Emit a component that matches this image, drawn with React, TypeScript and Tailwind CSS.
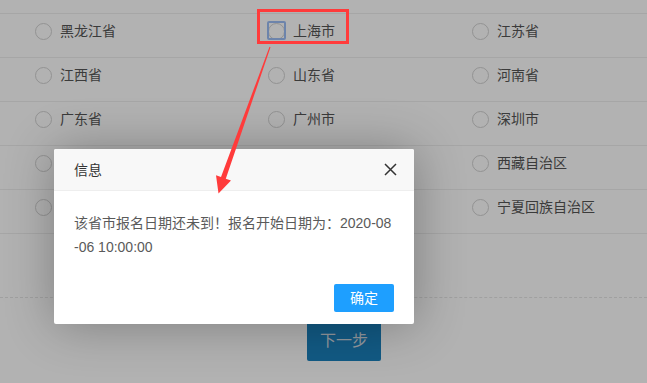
import React from "react";

const rows: (string | null)[][] = [
  ["黑龙江省", "上海市", "江苏省"],
  ["江西省", "山东省", "河南省"],
  ["广东省", "广州市", "深圳市"],
  ["", "", "西藏自治区"],
  ["", "", "宁夏回族自治区"],
];

function Radio({ focused }: { focused?: boolean }) {
  return (
    <span className="relative inline-block w-[17px] h-[17px] shrink-0">
      <span className="block w-[17px] h-[17px] rounded-full border border-[#d2d2d2] bg-white" />
      {focused && (
        <span className="absolute left-[-1px] top-[-2px] w-[19px] h-[19px] border-2 border-[#9dbdf5] rounded-[2px]" />
      )}
    </span>
  );
}

export default function App() {
  const font = { fontFamily: '"Liberation Sans", "Noto Sans CJK SC", sans-serif' };
  return (
    <div className="relative w-[647px] h-[383px] overflow-hidden bg-white" style={font}>
      {/* page */}
      <div className="pt-[13px]">
        <div className="border-t border-[#eeeeee]">
          {rows.map((r, i) => (
            <div key={i} className="h-[44px] border-b border-[#eeeeee] pt-[9px] pl-[35px] grid grid-cols-[233px_204px_1fr]">
              {r.map((name, j) => (
                <div key={j} className="flex items-center gap-[8px] h-[17px]">
                  <Radio focused={i === 0 && j === 1} />
                  {name ? (
                    <span className="text-[14px] leading-[17px] text-[#555]">{name}</span>
                  ) : null}
                </div>
              ))}
            </div>
          ))}
        </div>
        <div className="mt-[63px] border-t border-dashed border-[#e6e6e6]" />
        <div className="mt-[23px] ml-[307px] w-[74px] h-[40px] rounded-[2px] bg-[#1b81be] flex items-center justify-center text-[16px] text-[#d4dce2]">
          下一步
        </div>
      </div>

      {/* shade */}
      <div className="absolute inset-0 bg-black/30" />

      {/* dialog */}
      <div className="absolute left-[54px] top-[149px] w-[360px] bg-white rounded-[2px] shadow-[1px_1px_50px_rgba(0,0,0,0.3)]">
        <div className="h-[42px] bg-[#f8f8f8] border-b border-[#eeeeee] flex items-center justify-between pl-[20px] pr-[17px] rounded-t-[2px]">
          <span className="text-[14px] leading-[20px] text-[#333]">信息</span>
          <svg width="13" height="13" viewBox="0 0 13 13">
            <path d="M1 1L12 12M12 1L1 12" stroke="#333" strokeWidth="1.5" fill="none" />
          </svg>
        </div>
        <div className="p-[20px] text-[14px] leading-[24px] text-[#5a5a5a]">
          <div className="whitespace-nowrap">该省市报名日期还未到！报名开始日期为：2020-08</div>
          <div className="whitespace-nowrap">-06 10:00:00</div>
        </div>
        <div className="flex justify-end px-[15px] pb-[12px]">
          <div className="mt-[5px] mr-[5px] h-[28px] w-[60px] rounded-[2px] bg-[#1e9fff] text-white text-[14px] flex items-center justify-center">
            确定
          </div>
        </div>
      </div>

      {/* annotations */}
      <div className="absolute left-[257px] top-[9px] w-[92px] h-[35px] border-[3px] border-[#ff3b3b]" />
      <svg className="absolute left-0 top-0" width="647" height="383" viewBox="0 0 647 383">
        <polygon
          points="269.5,46.8 270.5,47.2 225.8,178.7 231,180.5 218.5,193.5 216,175.3 221,177.1"
          fill="#ff3b3b"
        />
      </svg>
    </div>
  );
}
